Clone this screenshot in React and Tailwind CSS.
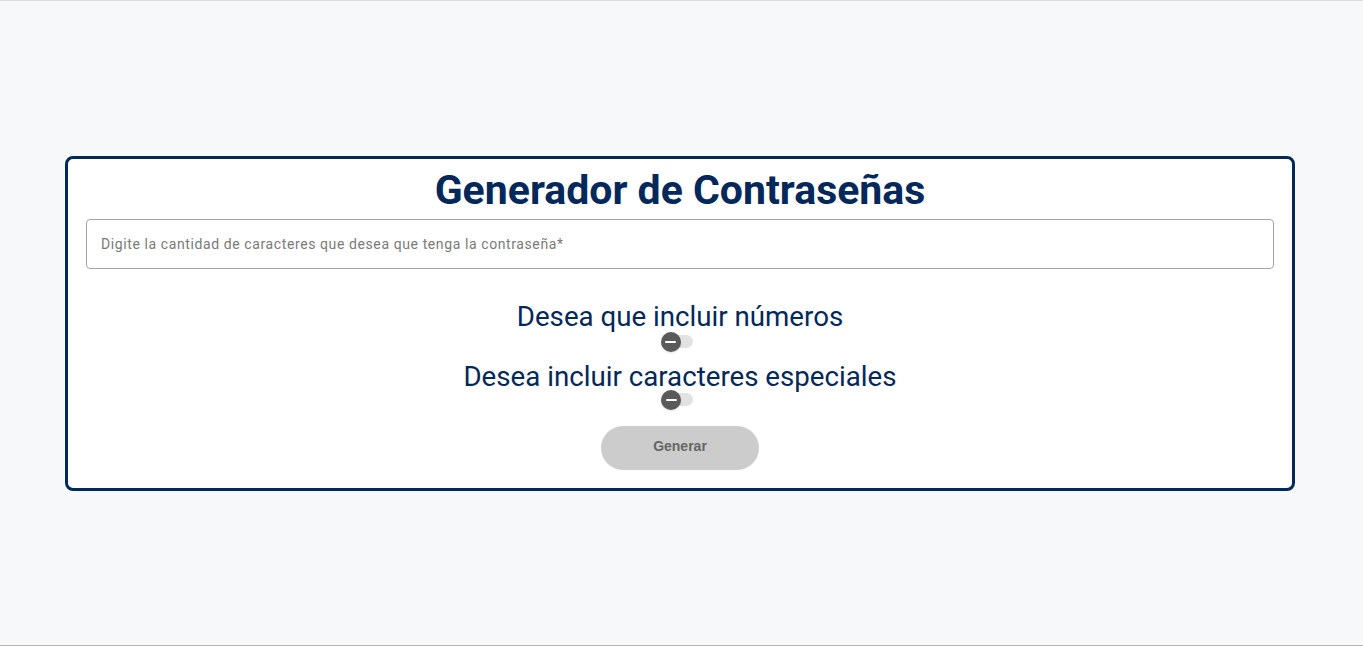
import { useState } from "react";

function Toggle({ checked, onChange }) {
  return (
    <button
      type="button"
      onClick={() => onChange(!checked)}
      className="relative mr-[6px] w-[32px] h-[20px] flex items-center"
    >
      <span className="absolute left-[6px] right-[0px] h-[13px] rounded-full bg-[#e2e2e2]" />
      <span className="absolute left-[0px] w-[20px] h-[20px] rounded-full bg-[#5a5a5a] shadow flex items-center justify-center">
        <span className="w-[11px] h-[2px] bg-white rounded" />
      </span>
    </button>
  );
}

export default function App() {
  const [numeros, setNumeros] = useState(false);
  const [especiales, setEspeciales] = useState(false);

  return (
    <div
      className="min-h-screen h-[646px] bg-[#f7f8fa] border-t border-t-[#dadce0] border-b border-b-[#b5b5b5] flex items-center"
      style={{ fontFamily: "Roboto, 'Liberation Sans', sans-serif" }}
    >
      <div className="ml-[65px] w-[1230px] bg-white border-[3px] border-[#04285a] rounded-[8px] px-[18px] pt-[6px] pb-[18px] flex flex-col items-center">
        <h1 className="text-[41px] leading-[50px] font-bold text-[#04285a]">
          Generador de Contraseñas
        </h1>
        <input
          type="number"
          placeholder="Digite la cantidad de caracteres que desea que tenga la contraseña*"
          className="mt-[4px] w-full h-[50px] border border-[#a3a3a3] rounded-[4px] px-[14px] text-[14px] tracking-[0.6px] text-[#333] placeholder:text-[#7a7a7a] outline-none"
        />
        <div className="mt-[33px] flex flex-col items-center">
          <span className="text-[27.7px] leading-[30px] text-[#04285a]">
            Desea que incluir números
          </span>
          <Toggle checked={numeros} onChange={setNumeros} />
        </div>
        <div className="mt-[8px] flex flex-col items-center">
          <span className="pt-[2px] text-[27.7px] leading-[30px] text-[#04285a]">
            Desea incluir caracteres especiales
          </span>
          <div className="-mt-[2px]">
            <Toggle checked={especiales} onChange={setEspeciales} />
          </div>
        </div>
        <button
          type="button"
          disabled
          className="mt-[16px] w-[158px] h-[44px] pb-[3px] rounded-full bg-[#cccccc] text-[14px] font-bold text-[#666666]"
          style={{ fontFamily: "'Liberation Sans', Arial, sans-serif" }}
        >
          Generar
        </button>
      </div>
    </div>
  );
}
